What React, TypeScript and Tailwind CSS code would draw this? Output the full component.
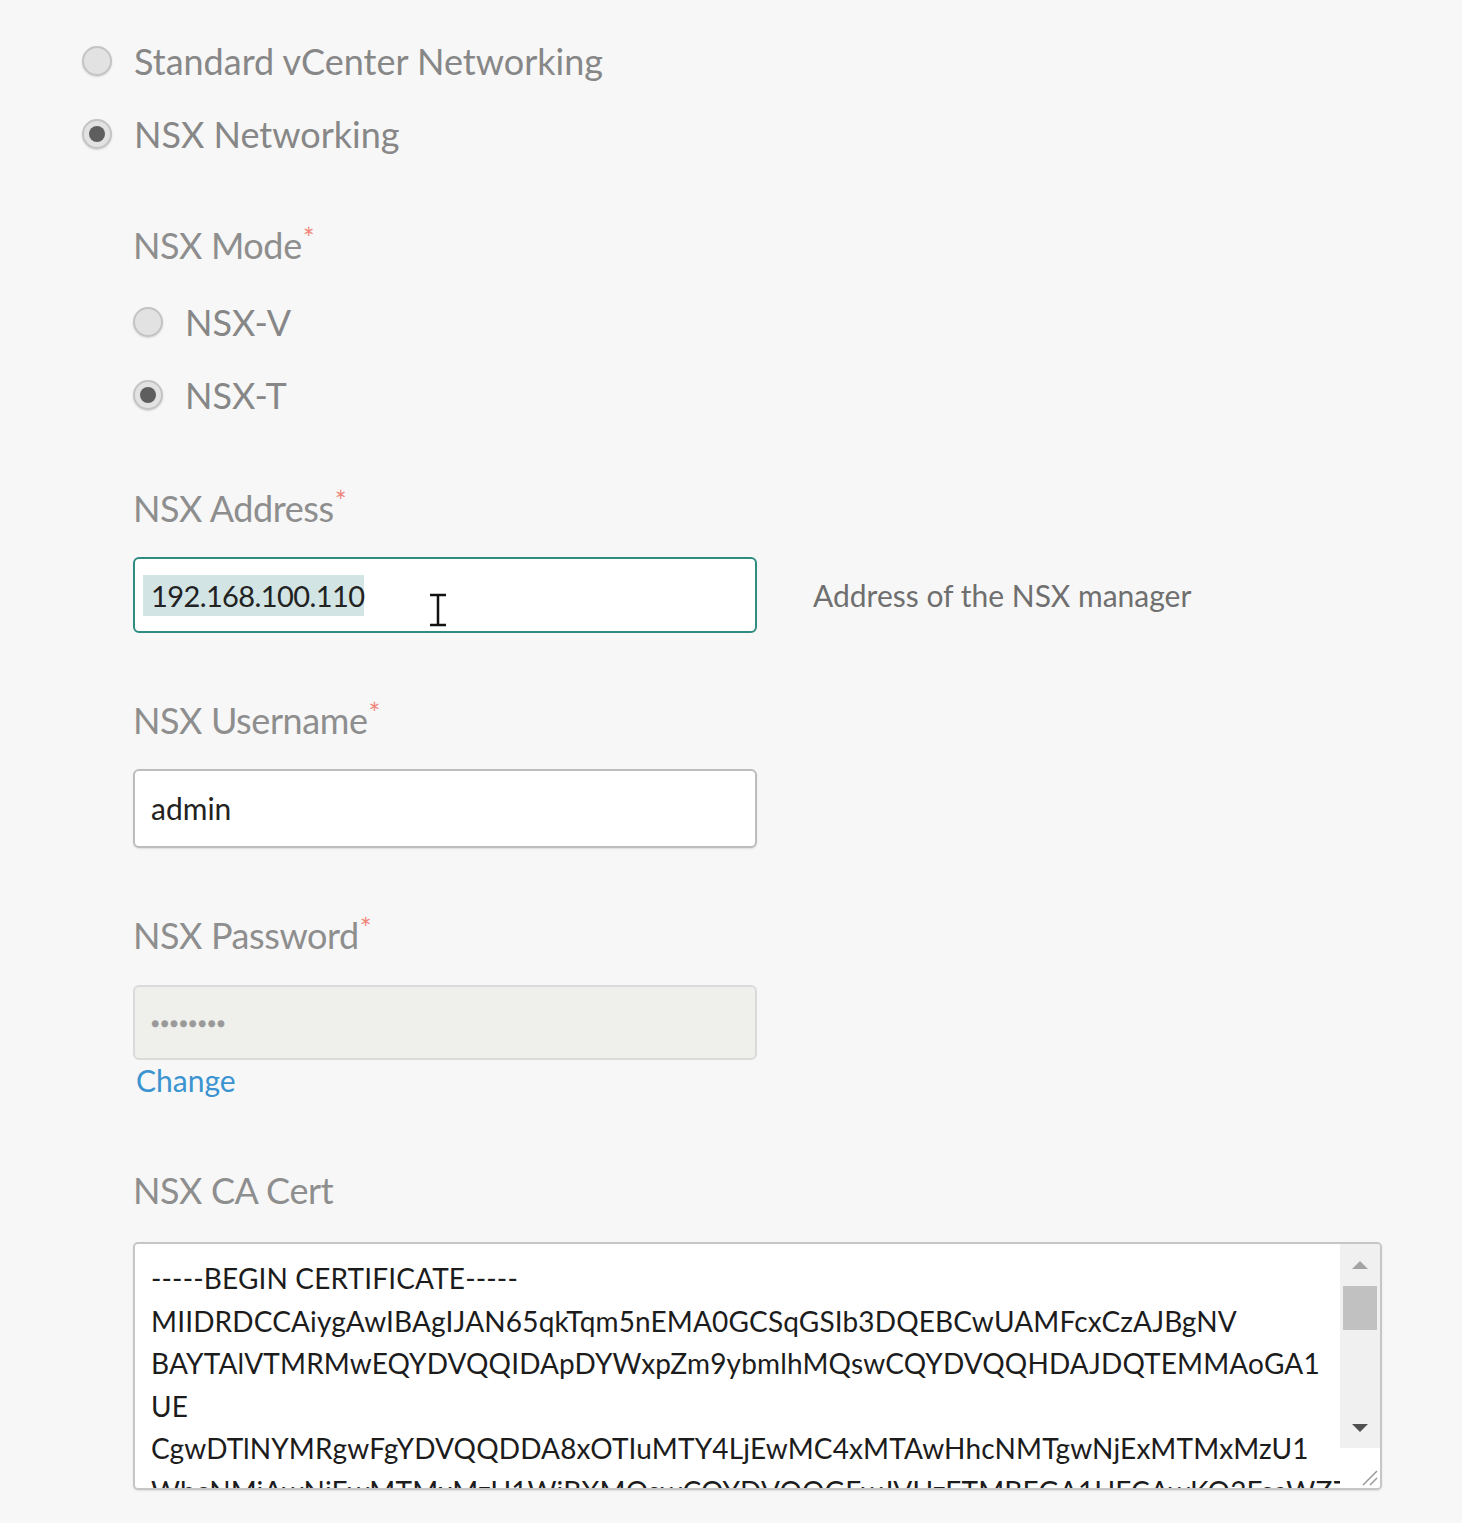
const certLines = [
    '-----BEGIN CERTIFICATE-----',
    'MIIDRDCCAiygAwIBAgIJAN65qkTqm5nEMA0GCSqGSIb3DQEBCwUAMFcxCzAJBgNV',
    'BAYTAlVTMRMwEQYDVQQIDApDYWxpZm9ybmlhMQswCQYDVQQHDAJDQTEMMAoGA1',
    'UE',
    'CgwDTlNYMRgwFgYDVQQDDA8xOTIuMTY4LjEwMC4xMTAwHhcNMTgwNjExMTMxMzU1',
    'WhcNMjAwNjEwMTMxMzU1WjBXMQswCQYDVQQGEwJVUzETMBEGA1UECAwKQ2FsaWZ7',
];

function Radio({ checked, label, className }: { checked?: boolean; label: string; className?: string }) {
    return (
        <div className={`flex items-center h-[73px] ${className ?? ''}`}>
            <span className="flex h-[30px] w-[30px] items-center justify-center rounded-full border-2 border-[#c4c4c4] bg-[#e2e2e2] shadow-[0_1px_2px_rgba(0,0,0,0.15)]">
                {checked && <span className="h-[16px] w-[16px] rounded-full bg-[#5e5e5e]" />}
            </span>
            <span className="ml-[22px] text-[36px] leading-[50px] text-[#878787]">{label}</span>
        </div>
    );
}

function Label({ text, required, className }: { text: string; required?: boolean; className?: string }) {
    return (
        <div className={`flex h-[50px] items-start text-[36px] leading-[50px] tracking-[-0.4px] text-[#8e8e8e] ${className ?? ''}`}>
            {text}
            {required && <span className="ml-[1px] text-[28px] leading-[36px] text-[#f0867c]">*</span>}
        </div>
    );
}

export default function App() {
    return (
        <div className="min-h-screen bg-[#f7f7f7] font-['Lato',sans-serif]">
            <div className="pl-[82px] pt-[24px]">
                <Radio label="Standard vCenter Networking" />
                <Radio checked label="NSX Networking" />
            </div>

            <div className="pl-[133px]">
                <Label text="NSX Mode" required className="mt-[50px]" />
                <div className="mt-[15px]">
                    <Radio label="NSX-V" />
                    <Radio checked label="NSX-T" />
                </div>

                <Label text="NSX Address" required className="mt-[52px]" />
                <div className="mt-[24px] flex items-center">
                    <div className="relative flex h-[76px] w-[624px] items-center rounded-[6px] border-2 border-[#2f8c80] bg-white pl-[16px]">
                        <span className="bg-[#d2e4e4] -ml-[8px] pl-[8px] text-[29px] leading-[41px] tracking-[-0.6px] text-[#222]">
                            192.168.100.110
                        </span>
                        <svg className="absolute left-[292px] top-[34px]" width="22" height="34" viewBox="0 0 22 34">
                            <path d="M3 2h16M11 2v30M3 32h16" stroke="#111" strokeWidth="2.5" fill="none" />
                        </svg>
                    </div>
                    <span className="ml-[56px] text-[30px] text-[#6f6f6f]">Address of the NSX manager</span>
                </div>

                <Label text="NSX Username" required className="mt-[62px]" />
                <div className="mt-[24px] flex h-[79px] w-[624px] items-center rounded-[6px] border-2 border-[#bdbdbd] bg-white pl-[16px] shadow-[0_1px_2px_rgba(0,0,0,0.1)]">
                    <span className="text-[30px] text-[#222]">admin</span>
                </div>

                <Label text="NSX Password" required className="mt-[62px]" />
                <div className="mt-[25px] flex h-[75px] w-[624px] items-center rounded-[6px] border-2 border-[#dadada] bg-[#efefeb] pl-[16px]">
                    <span className="text-[14px] tracking-[1px] text-[#9a9a9a]">●●●●●●●●</span>
                </div>
                <div className="h-[40px] pl-[3px] text-[30px] leading-[40px] text-[#3b94d0]">Change</div>

                <Label text="NSX CA Cert" className="mt-[65px]" />
                <div className="mt-[27px] flex h-[248px] w-[1249px] overflow-hidden rounded-[5px] border-2 border-[#c6c6c6] bg-white shadow-[0_1px_2px_rgba(0,0,0,0.1)]">
                    <div className="flex-1 overflow-hidden pl-[16px] pt-[13px]">
                        {certLines.map((line, i) => (
                            <div key={i} className="whitespace-pre text-[28px] leading-[42.5px] tracking-[0.15px] text-[#1c1c1c]">
                                {line}
                            </div>
                        ))}
                    </div>
                    <div className="flex w-[40px] flex-col bg-[#f0f0f0]">
                        <div className="flex h-[42px] items-center justify-center">
                            <svg width="18" height="10" viewBox="0 0 18 10">
                                <path d="M9 1L17 9H1Z" fill="#a3a3a3" />
                            </svg>
                        </div>
                        <div className="mx-[3px] h-[44px] bg-[#c1c1c1]" />
                        <div className="flex-1" />
                        <div className="flex h-[40px] items-center justify-center">
                            <svg width="18" height="10" viewBox="0 0 18 10">
                                <path d="M1 1H17L9 9Z" fill="#505050" />
                            </svg>
                        </div>
                        <div className="relative h-[40px] bg-white">
                            <svg className="absolute bottom-[2px] right-[2px]" width="20" height="20" viewBox="0 0 20 20">
                                <path d="M19 5L5 19M19 12L12 19" stroke="#9a9a9a" strokeWidth="1.5" />
                            </svg>
                        </div>
                    </div>
                </div>
            </div>
        </div>
    );
}
